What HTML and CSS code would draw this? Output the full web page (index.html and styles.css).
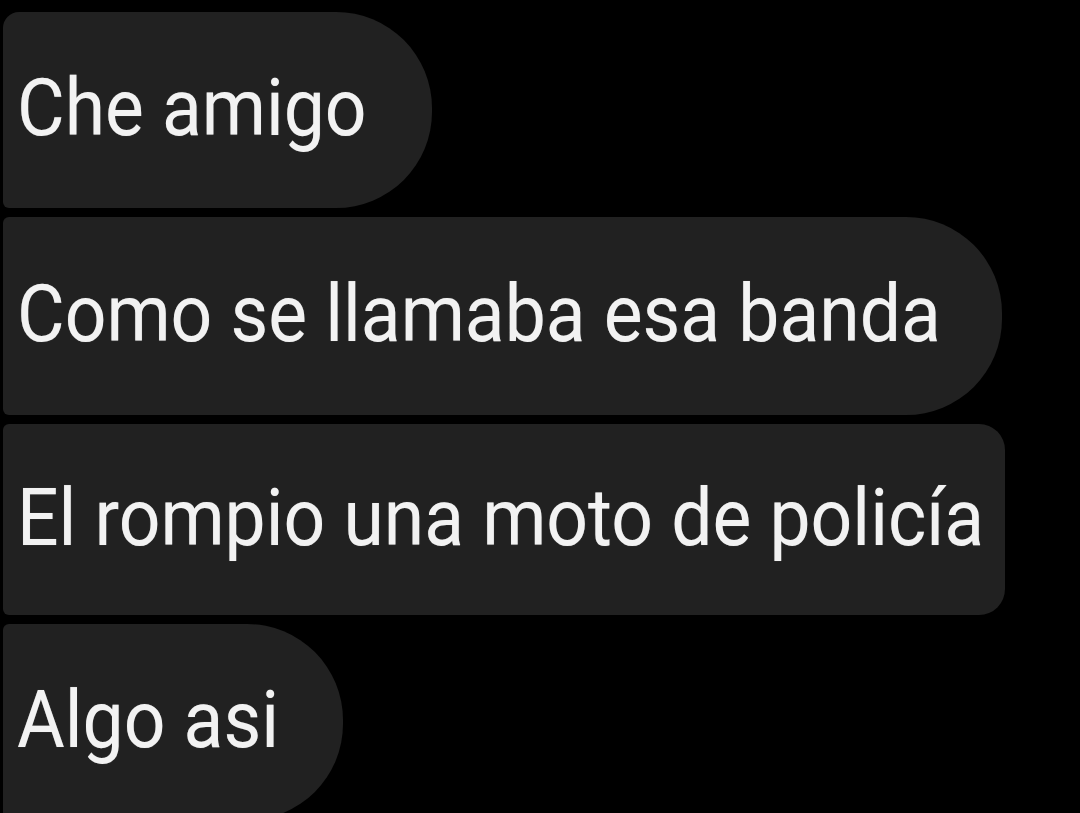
FILE: index.html
```html
<!DOCTYPE html>
<html lang="es">
<head>
<meta charset="utf-8">
<title>Chat</title>
<link rel="stylesheet" href="styles.css">
</head>
<body>
<main class="thread">
  <div class="bubble first round w-short"><span class="text">Che amigo</span></div>
  <div class="bubble round tall w-long"><span class="text">Como se llamaba esa banda</span></div>
  <div class="bubble square short w-full"><span class="text">El rompio una moto de policía</span></div>
  <div class="bubble last round w-tiny"><span class="text">Algo asi</span></div>
</main>
</body>
</html>
```

FILE: styles.css
```css
html, body {
  margin: 0;
  padding: 0;
  background: #000;
  height: 100%;
  overflow: hidden;
}
.thread {
  display: flex;
  flex-direction: column;
  align-items: flex-start;
  gap: 9px;
  padding: 12px 0 0 3px;
}
.bubble {
  box-sizing: border-box;
  height: 196px;
  flex-shrink: 0;
  display: flex;
  align-items: center;
  padding: 0 0 0 14px;
  background: #212121;
  color: #f2f2f2;
  font-family: Roboto, "Noto Sans", sans-serif;
  font-size: 80px;
  border-radius: 6px 96px 96px 6px;
  white-space: nowrap;
  overflow: hidden;
}
.bubble.first {
  border-top-left-radius: 16px;
}
.bubble.tall {
  height: 198px;
}
.bubble.short {
  height: 191px;
}
.bubble.square {
  border-radius: 6px 26px 26px 6px;
}
.w-short { width: 429px; }
.w-long { width: 999px; }
.w-full { width: 1002px; }
.w-tiny { width: 340px; }
.text {
  display: inline-block;
  line-height: 1;
  transform: scaleX(0.915);
  transform-origin: left center;
  margin-top: -4px;
  text-shadow: 0 0 1px rgba(255, 255, 255, 0.35);
}
```
